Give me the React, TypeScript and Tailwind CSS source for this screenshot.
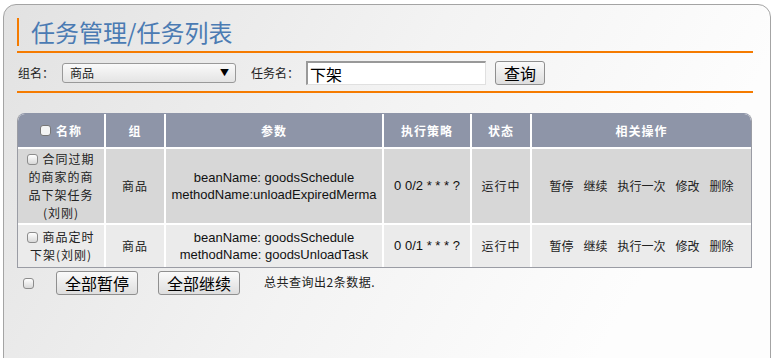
import React from "react";

const cjk = "font-['Noto_Sans_CJK_SC','Noto_Sans',sans-serif]";
const arial = "font-['Liberation_Sans',Arial,sans-serif]";

function Box({ className = "" }: { className?: string }) {
  return (
    <span
      className={`inline-block w-[11px] h-[11px] rounded-[3px] border border-[#8c8c8c] bg-gradient-to-b from-[#ffffff] to-[#d8d8d8] align-middle shrink-0 ${className}`}
    />
  );
}

function Btn({ children, className = "" }: { children: React.ReactNode; className?: string }) {
  return (
    <button
      className={`h-[24px] rounded-[3px] border border-[#8f8f8f] bg-gradient-to-b from-[#fafafa] to-[#dedede] text-[16px] leading-none text-black flex items-center justify-center ${cjk} ${className}`}
    >
      {children}
    </button>
  );
}

const Ops = () => (
  <div className="flex items-center justify-center gap-[10px] text-[12px] text-[#222]">
    <span>暂停</span>
    <span>继续</span>
    <span>执行一次</span>
    <span>修改</span>
    <span>删除</span>
  </div>
);

export default function App() {
  return (
    <div className={`w-[771px] h-[358px] bg-white overflow-hidden ${cjk}`}>
      <div className="ml-[3px] mt-[4px] w-[768px] h-[400px] border border-[#a4a4a4] rounded-t-[13px] bg-[linear-gradient(120deg,#e2e2e2_0%,#f3f3f3_45%,#fdfdfd_80%)] pl-[13px] pt-[13px]">
        {/* title */}
        <div className="h-[28px] border-l-2 border-[#f57b00] pl-[12px] flex items-center">
          <span className="text-[24px] leading-none text-[#4b7bb3] tracking-[0px]">任务管理/任务列表</span>
        </div>
        <div className="mt-[5px] h-[2px] w-[736px] bg-[#f57b00]" />

        {/* filter */}
        <div className="mt-[8px] h-[24px] flex items-center text-[12px] text-[#222]">
          <span className="ml-[1px] w-[44px]">组名：</span>
          <div className="w-[174px] h-[20px] rounded-[3px] border border-[#999] bg-gradient-to-b from-[#fafafa] to-[#e4e4e4] flex items-center pl-[7px] pr-[6px]">
            <span className="flex-1">商品</span>
            <span className="text-[9px] text-black">▼</span>
          </div>
          <span className="ml-[15px] w-[55px]">任务名：</span>
          <div className="w-[180px] h-[24px] bg-white border-t-2 border-l-2 border-[#999] border-b border-r border-b-[#e0e0e0] border-r-[#e0e0e0] flex items-center pl-[2px]">
            <span className="text-[16px] text-black leading-none">下架</span>
          </div>
          <Btn className="ml-[9px] w-[50px]">查询</Btn>
        </div>

        <div className="mt-[6px] h-[2px] w-[736px] bg-[#f57b00]" />

        {/* table */}
        <div className="mt-[20px] w-[735px] border border-[#9a9ca4] border-t-[#8e95a8] rounded-t-[8px] overflow-hidden">
          <div className="grid grid-cols-[86px_58px_216px_86px_58px_219px] gap-[2px] bg-white">
            {/* header */}
            <div className="h-[33px] bg-[#8e95a8] flex items-center justify-center gap-[5px] text-white font-bold text-[12px]">
              <Box className="bg-none bg-[#f4f4f4] border-[#777]" />
              <span className="tracking-[1px]">名称</span>
            </div>
            {["组", "参数", "执行策略", "状态", "相关操作"].map((h) => (
              <div
                key={h}
                className="h-[33px] bg-[#8e95a8] flex items-center justify-center text-white font-bold text-[12px] tracking-[1px]"
              >
                {h}
              </div>
            ))}

            {/* row 1 */}
            <div className="h-[74px] bg-[#d7d7d7] flex flex-col items-center justify-center text-[12px] leading-[18px] text-[#222] tracking-[1px]">
              <div className="flex items-center gap-[4px]">
                <Box />
                <span>合同过期</span>
              </div>
              <div>的商家的商</div>
              <div>品下架任务</div>
              <div>(刘刚)</div>
            </div>
            <div className="bg-[#d7d7d7] flex items-center justify-center text-[12px] text-[#222] tracking-[1px]">商品</div>
            <div className={`bg-[#d7d7d7] flex flex-col items-center justify-center text-[13px] leading-[17px] text-[#111] ${arial}`}>
              <div>beanName: goodsSchedule</div>
              <div>methodName:unloadExpiredMerma</div>
            </div>
            <div className={`bg-[#d7d7d7] flex items-center justify-center text-[13px] text-[#111] ${arial}`}>0 0/2 * * * ?</div>
            <div className="bg-[#d7d7d7] flex items-center justify-center text-[12px] text-[#222] tracking-[1px]">运行中</div>
            <div className="bg-[#d7d7d7] flex items-center justify-center">
              <Ops />
            </div>

            {/* row 2 */}
            <div className="h-[42px] bg-[#ebebeb] flex flex-col items-center justify-center text-[12px] leading-[18px] text-[#222] tracking-[1px]">
              <div className="flex items-center gap-[4px]">
                <Box />
                <span>商品定时</span>
              </div>
              <div>下架(刘刚)</div>
            </div>
            <div className="bg-[#ebebeb] flex items-center justify-center text-[12px] text-[#222] tracking-[1px]">商品</div>
            <div className={`bg-[#ebebeb] flex flex-col items-center justify-center text-[13px] leading-[17px] text-[#111] ${arial}`}>
              <div>beanName: goodsSchedule</div>
              <div>methodName: goodsUnloadTask</div>
            </div>
            <div className={`bg-[#ebebeb] flex items-center justify-center text-[13px] text-[#111] ${arial}`}>0 0/1 * * * ?</div>
            <div className="bg-[#ebebeb] flex items-center justify-center text-[12px] text-[#222] tracking-[1px]">运行中</div>
            <div className="bg-[#ebebeb] flex items-center justify-center">
              <Ops />
            </div>
          </div>
        </div>

        {/* footer */}
        <div className="mt-[3px] h-[24px] flex items-center">
          <Box className="ml-[6px]" />
          <Btn className="ml-[22px] w-[82px]">全部暂停</Btn>
          <Btn className="ml-[20px] w-[82px]">全部继续</Btn>
          <span className="ml-[24px] text-[12px] text-[#222] tracking-[0.5px] -mt-[3px]">总共查询出2条数据.</span>
        </div>
      </div>
    </div>
  );
}
